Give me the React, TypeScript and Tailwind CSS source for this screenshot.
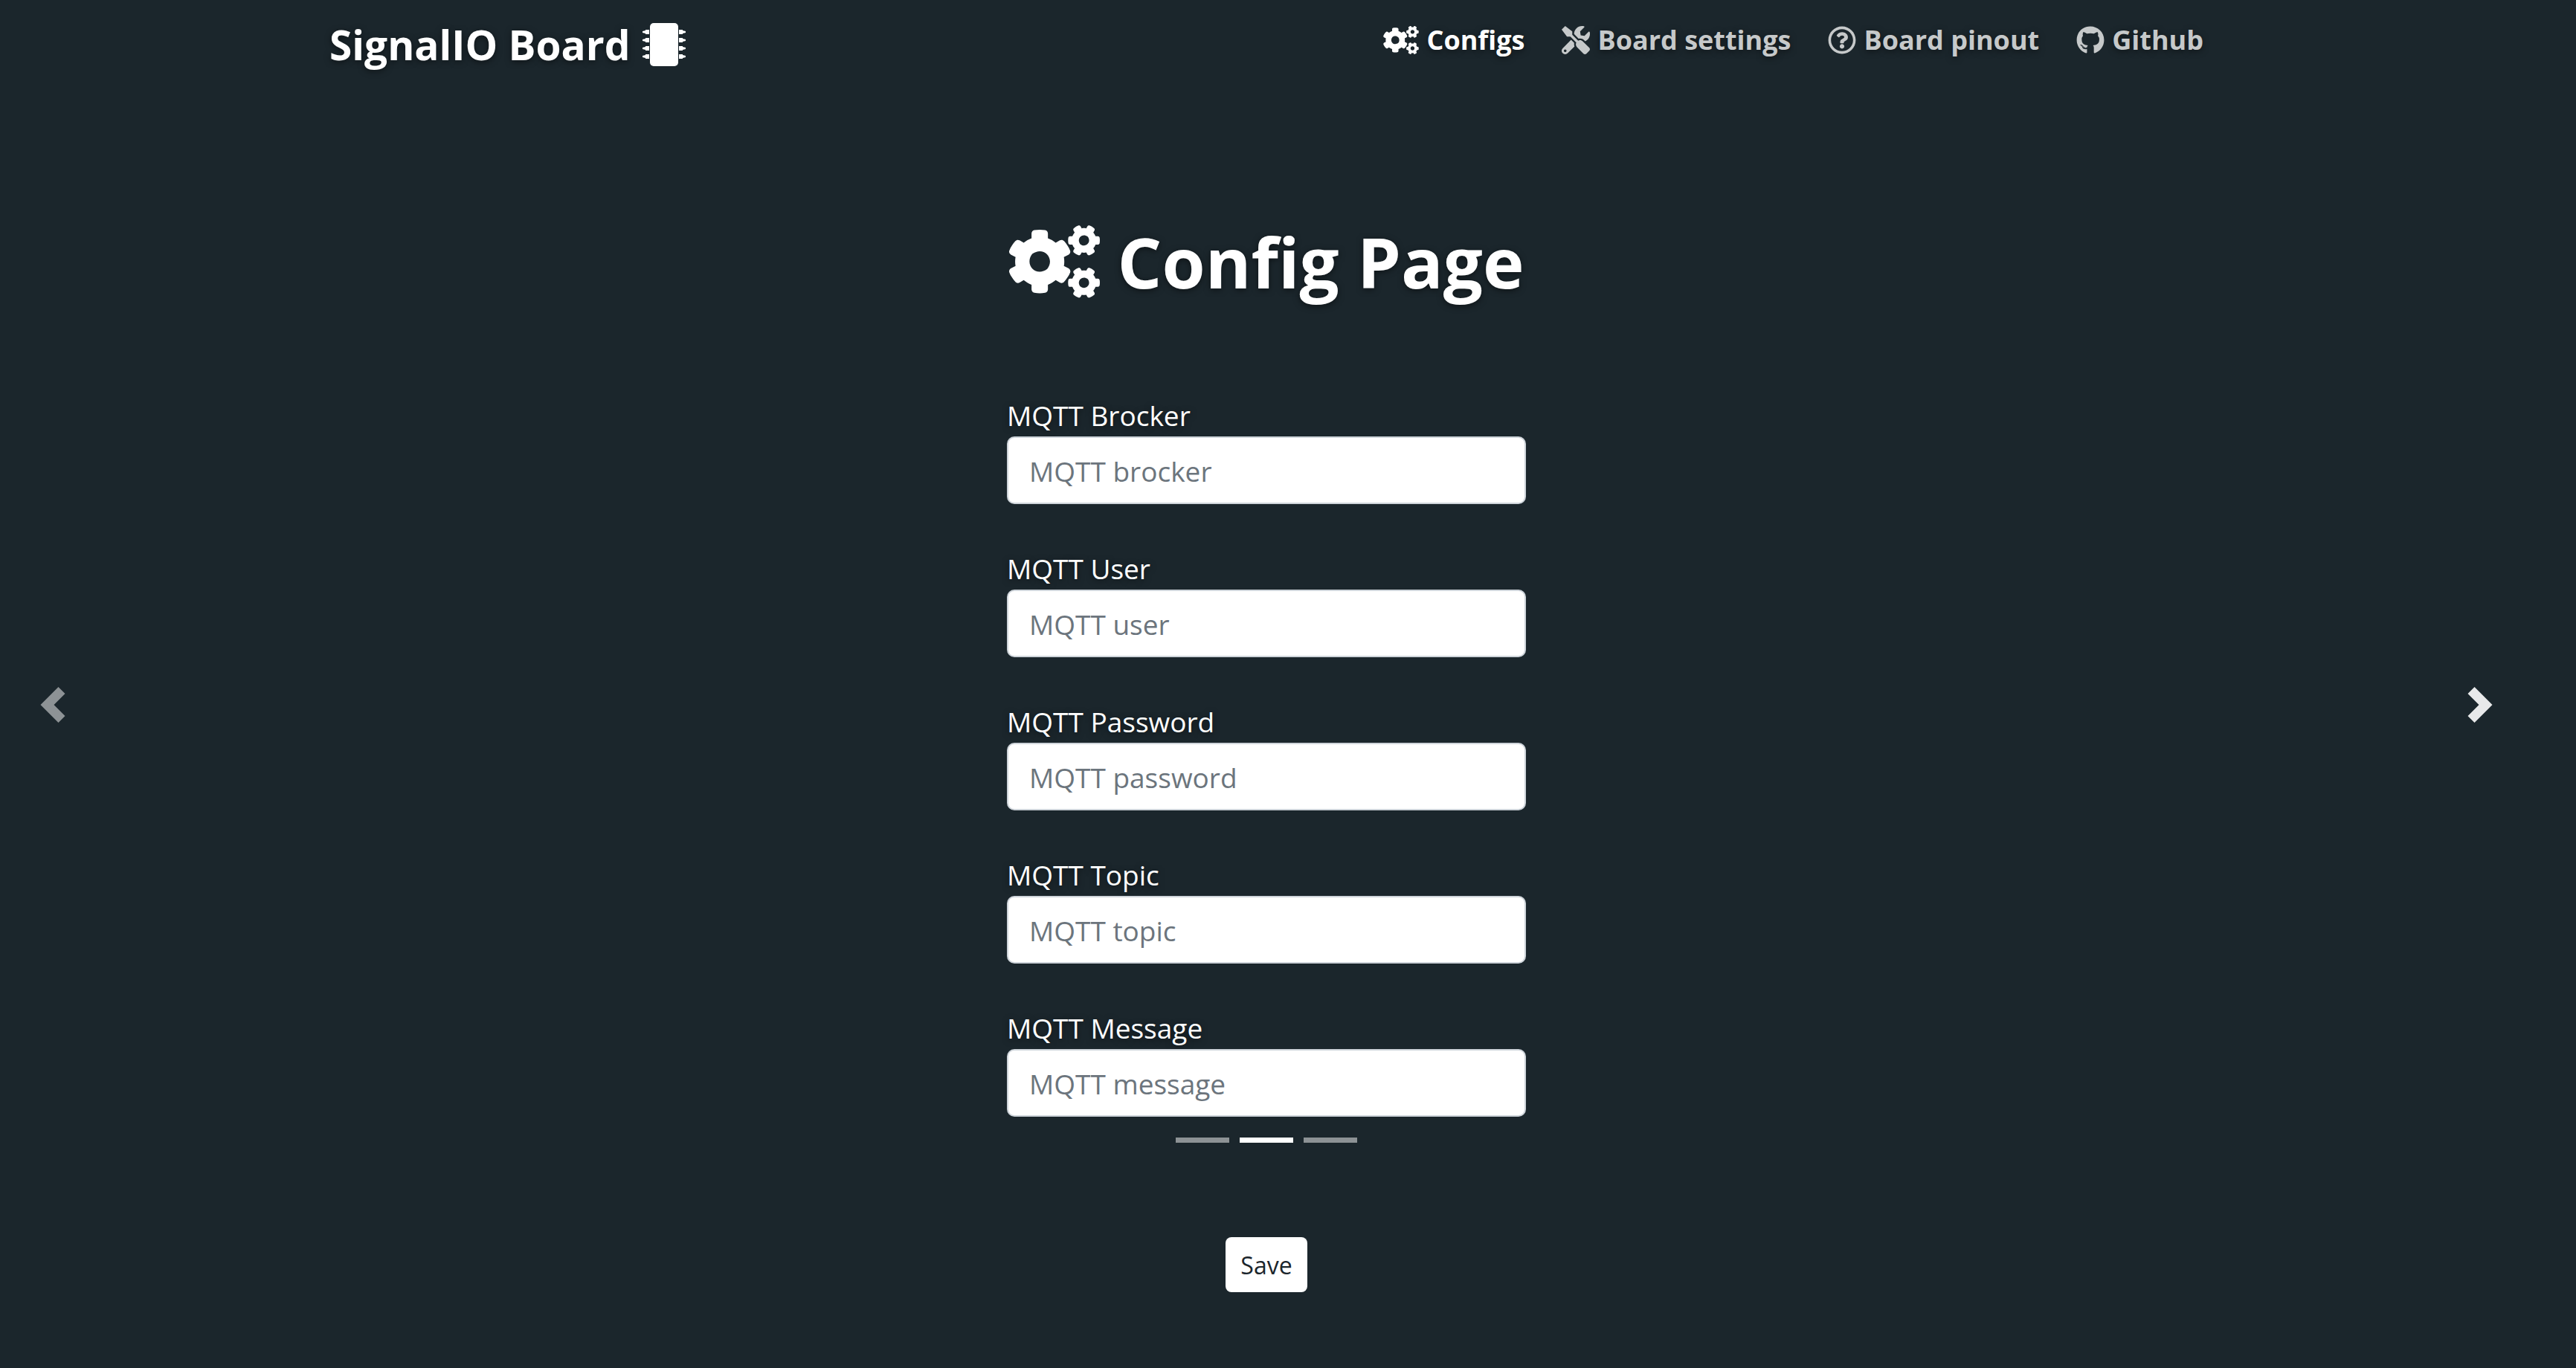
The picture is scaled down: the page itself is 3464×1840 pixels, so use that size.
import React from "react";
import { FaCogs, FaGithub, FaRegQuestionCircle, FaTools } from "react-icons/fa";

const FIELDS = [
  { id: "broker", label: "MQTT Brocker", placeholder: "MQTT brocker" },
  { id: "user", label: "MQTT User", placeholder: "MQTT user" },
  { id: "password", label: "MQTT Password", placeholder: "MQTT password" },
  { id: "topic", label: "MQTT Topic", placeholder: "MQTT topic" },
  { id: "message", label: "MQTT Message", placeholder: "MQTT message" },
];

const LINKS = [
  { label: "Configs", Icon: FaCogs, active: true },
  { label: "Board settings", Icon: FaTools, active: false },
  { label: "Board pinout", Icon: FaRegQuestionCircle, active: false },
  { label: "Github", Icon: FaGithub, active: false },
];

const SLIDES = [
  { name: "Slide 1", active: false },
  { name: "Slide 2", active: true },
  { name: "Slide 3", active: false },
];

function ChipIcon() {
  const rows = [13, 24, 35, 46];
  return (
    <svg viewBox="0 0 58 60" className="h-[60px] w-[58px]" fill="currentColor" aria-hidden="true">
      <rect x="10" y="1" width="38" height="58" rx="5" />
      {rows.map((y) => (
        <g key={y}>
          <path d={`M9 ${y - 3}H4V${y - 2}L0 ${y - 1}V${y + 1}L4 ${y + 2}V${y + 3}H9Z`} />
          <path d={`M49 ${y - 3}H54V${y - 2}L58 ${y - 1}V${y + 1}L54 ${y + 2}V${y + 3}H49Z`} />
        </g>
      ))}
    </svg>
  );
}

function Chevron({ flipped = false }: { flipped?: boolean }) {
  return (
    <svg viewBox="0 0 8 8" className="size-12" fill="currentColor" aria-hidden="true">
      {flipped ? (
        <path d="M2.75 0l-1.5 1.5L3.75 4l-2.5 2.5L2.75 8l4-4-4-4z" />
      ) : (
        <path d="M5.25 0l-4 4 4 4 1.5-1.5L4.25 4l2.5-2.5L5.25 0z" />
      )}
    </svg>
  );
}

export default function App() {
  return (
    <div className="min-h-screen bg-[#1b262c] pr-[58px] font-['Open_Sans','Noto_Sans',sans-serif] text-[37px] text-white [text-shadow:0_2px_8px_rgba(0,0,0,0.5)]">
      <header className="mx-auto flex w-full max-w-[2520px] items-start justify-between">
        <a href="#" className="flex items-center gap-4 pt-[30px] text-[55px] leading-[60px] font-bold">
          SignalIO Board
          <ChipIcon />
        </a>
        <nav className="flex gap-[50px] pt-7 text-[36px] leading-[52px] font-bold">
          {LINKS.map(({ label, Icon, active }) => (
            <a
              key={label}
              href="#"
              className={active ? "flex items-center gap-2.5 text-white" : "flex items-center gap-2.5 text-[#c6c9ca]"}
            >
              <Icon className={active ? "h-[38px] w-12" : "size-[38px]"} />
              {label}
            </a>
          ))}
        </nav>
      </header>

      <main className="flex items-center justify-between">
        <button type="button" aria-label="Previous" className="px-[47px] text-[#8d9295]">
          <Chevron />
        </button>

        <form className="flex w-[698px] flex-col items-center pt-[202px] pb-[68px]">
          <h1 className="flex w-full items-center justify-center gap-6 text-[94px] leading-[120px] font-bold whitespace-nowrap">
            <FaCogs className="h-[98px] w-[122px]" />
            Config Page
          </h1>
          <div className="flex w-full flex-col gap-[59px] pt-[119px]">
            {FIELDS.map((f) => (
              <div key={f.id} className="flex flex-col">
                <label htmlFor={f.id} className="leading-[56px]">
                  {f.label}
                </label>
                <input
                  id={f.id}
                  type={f.id === "password" ? "password" : "text"}
                  placeholder={f.placeholder}
                  className="h-[91px] rounded-[10px] border-2 border-[#ced4da] bg-white px-7 pt-0.5 text-[#495057] placeholder:text-[#6c757d]"
                />
              </div>
            ))}
          </div>
          <div className="flex gap-3.5 pt-7">
            {SLIDES.map((s) => (
              <button
                key={s.name}
                type="button"
                aria-label={s.name}
                className={s.active ? "h-[7px] w-[72px] bg-white" : "h-[7px] w-[72px] bg-[#8d9295]"}
              />
            ))}
          </div>
          <div className="pt-[127px]">
            <button type="submit" className="block h-[74px] rounded-lg bg-white px-5 pt-0.5 text-[32px] text-[#1b262c] [text-shadow:none]">
              Save
            </button>
          </div>
        </form>

        <button type="button" aria-label="Next" className="px-[47px] text-[#e8e9ea]">
          <Chevron flipped />
        </button>
      </main>
    </div>
  );
}
